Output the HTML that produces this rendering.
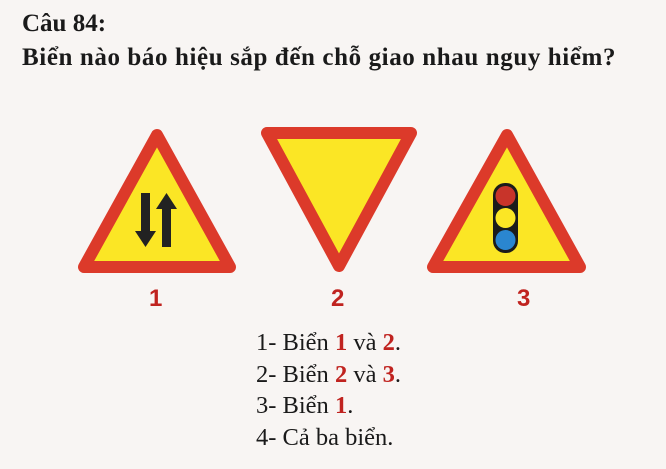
<!DOCTYPE html>
<html><head><meta charset="utf-8"><style>
body{margin:0;width:666px;height:469px;background:#f8f5f3;overflow:hidden;position:relative;font-family:"Liberation Serif",serif;color:#1a1a1a}
.t{position:absolute;font-weight:bold;font-size:25px;left:22px;white-space:nowrap;line-height:30px}
.a{position:absolute;left:256px;font-size:24.5px;white-space:nowrap;line-height:28px}
.r{color:#c0231f;font-weight:bold}
.n{position:absolute;top:286px;font-family:"Liberation Sans",sans-serif;font-weight:bold;font-size:24px;line-height:26px;color:#c0231f}
</style></head><body>
<div class="t" style="top:9px">Câu 84:</div>
<div class="t" style="top:43px;letter-spacing:0.6px">Biển nào báo hiệu sắp đến chỗ giao nhau nguy hiểm?</div>
<svg width="666" height="469" style="position:absolute;left:0;top:0">
<g stroke-linejoin="round">
<polygon points="157,135 84,267 230,267" fill="#fbe625" stroke="#dc3a2a" stroke-width="12"/>
<polygon points="267,133 411,133 339,266" fill="#fbe625" stroke="#dc3a2a" stroke-width="12"/>
<polygon points="507,135 433,267 580,267" fill="#fbe625" stroke="#dc3a2a" stroke-width="12"/>
</g>
<polygon points="141,193 150,193 150,231 156,231 145.5,247 135,231 141,231" fill="#222"/>
<polygon points="162,247 171,247 171,209 177,209 166.5,193 156,209 162,209" fill="#222"/>
<rect x="493" y="183" width="25" height="70" rx="12" fill="#1b1b1b"/>
<circle cx="505.5" cy="196" r="10" fill="#c8342a"/>
<circle cx="505.5" cy="218" r="10" fill="#fbe625"/>
<circle cx="505.5" cy="240" r="10" fill="#2a86d0"/>
</svg>
<div class="n" style="left:149px">1</div>
<div class="n" style="left:331px">2</div>
<div class="n" style="left:517px">3</div>
<div class="a" style="top:329px">1- Biển <span class="r">1</span> và <span class="r">2</span>.</div>
<div class="a" style="top:361px">2- Biển <span class="r">2</span> và <span class="r">3</span>.</div>
<div class="a" style="top:392px">3- Biển <span class="r">1</span>.</div>
<div class="a" style="top:424px">4- Cả ba biển.</div>
</body></html>
